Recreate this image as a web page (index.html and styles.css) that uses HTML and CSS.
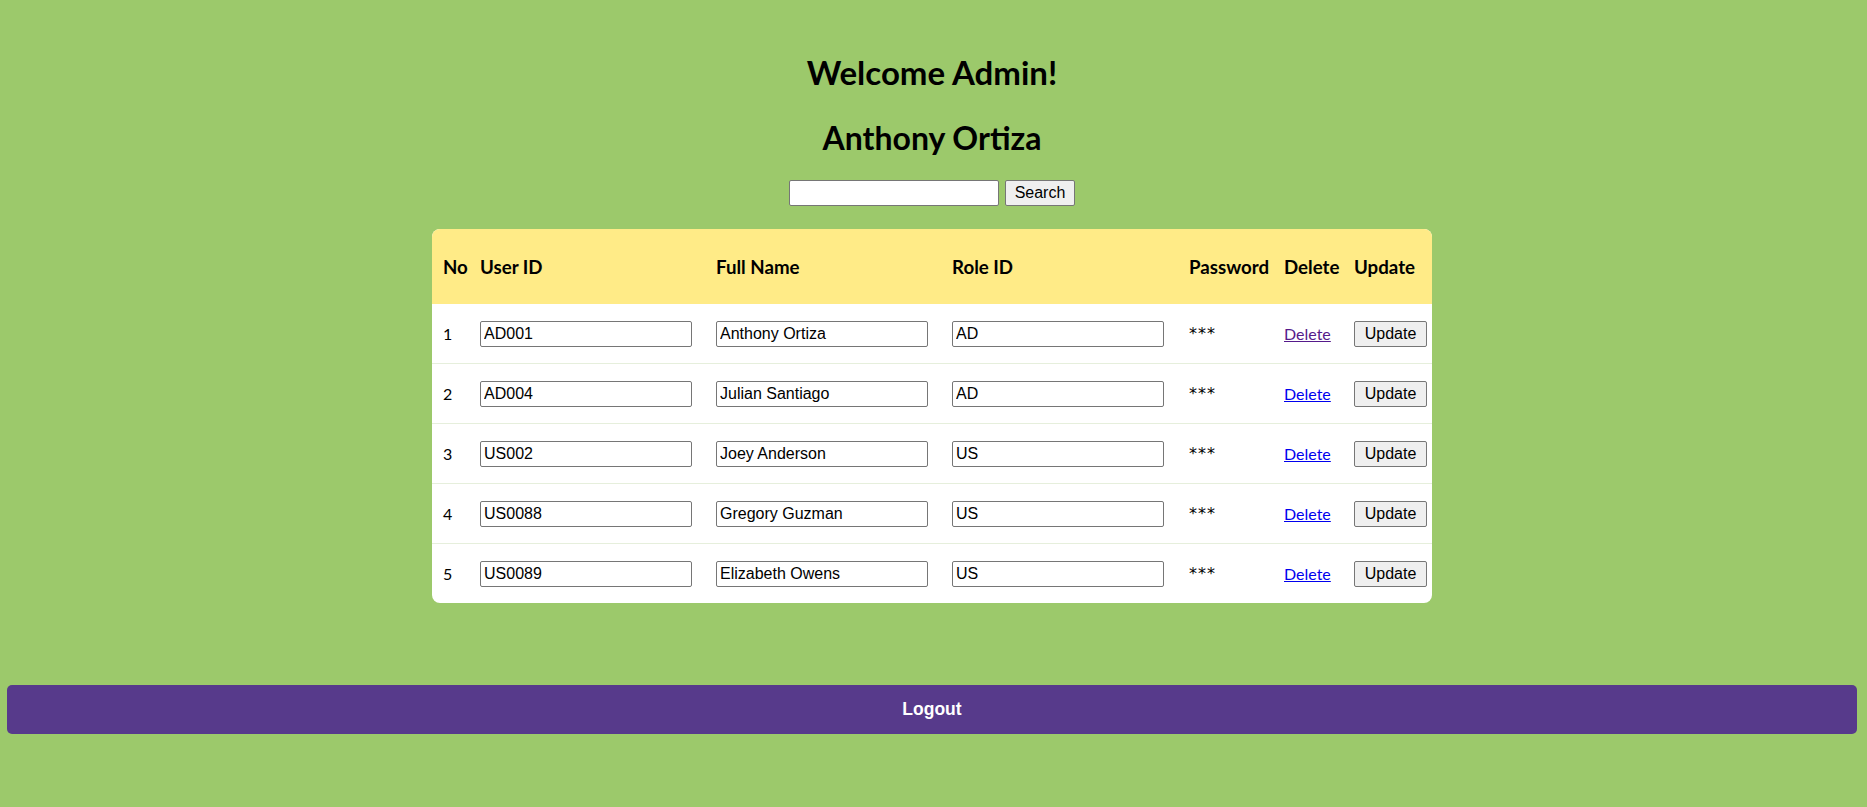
FILE: index.html
```html
<!DOCTYPE html>
<html>
<head>
<meta charset="utf-8">
<title>Admin</title>
<link rel="stylesheet" href="styles.css">
</head>
<body>
<div class="page">
  <h1 class="title">Welcome Admin!</h1>
  <h2 class="name">Anthony Ortiza</h2>
  <form class="search">
    <input class="search-input" type="text">
    <button class="btn search-btn" type="button">Search</button>
  </form>
  <div class="card">
    <table class="users">
      <colgroup>
        <col class="c-no"><col class="c-id"><col class="c-name"><col class="c-role"><col class="c-pass"><col class="c-del"><col class="c-upd">
      </colgroup>
      <thead>
        <tr><th>No</th><th>User ID</th><th>Full Name</th><th>Role ID</th><th>Password</th><th>Delete</th><th>Update</th></tr>
      </thead>
      <tbody>
        <tr><td>1</td><td><input class="field" value="AD001"></td><td><input class="field" value="Anthony Ortiza"></td><td><input class="field" value="AD"></td><td class="pw">***</td><td><a class="del visited" href="#">Delete</a></td><td><button class="btn upd" type="button">Update</button></td></tr>
        <tr><td>2</td><td><input class="field" value="AD004"></td><td><input class="field" value="Julian Santiago"></td><td><input class="field" value="AD"></td><td class="pw">***</td><td><a class="del" href="#">Delete</a></td><td><button class="btn upd" type="button">Update</button></td></tr>
        <tr><td>3</td><td><input class="field" value="US002"></td><td><input class="field" value="Joey Anderson"></td><td><input class="field" value="US"></td><td class="pw">***</td><td><a class="del" href="#">Delete</a></td><td><button class="btn upd" type="button">Update</button></td></tr>
        <tr><td>4</td><td><input class="field" value="US0088"></td><td><input class="field" value="Gregory Guzman"></td><td><input class="field" value="US"></td><td class="pw">***</td><td><a class="del" href="#">Delete</a></td><td><button class="btn upd" type="button">Update</button></td></tr>
        <tr><td>5</td><td><input class="field" value="US0089"></td><td><input class="field" value="Elizabeth Owens"></td><td><input class="field" value="US"></td><td class="pw">***</td><td><a class="del" href="#">Delete</a></td><td><button class="btn upd" type="button">Update</button></td></tr>
      </tbody>
    </table>
  </div>
  <div class="logout-wrap">
    <button class="logout" type="button">Logout</button>
  </div>
</div>
</body>
</html>
```
FILE: styles.css
```css
html, body {
  margin: 0;
  padding: 0;
  background: #9cc96b;
}
body {
  font-family: Lato, "Open Sans", sans-serif;
  color: #000;
}
.page {
  display: flex;
  flex-direction: column;
  align-items: center;
  padding: 51px 3px 0 0;
}
.title {
  margin: 0;
  font-size: 33px;
  line-height: 42px;
  font-weight: 700;
}
.name {
  margin: 24px 0 0 0;
  font-size: 32px;
  line-height: 42px;
  font-weight: 700;
}
.search {
  display: flex;
  gap: 6px;
  margin-top: 21px;
}
.search-input {
  box-sizing: border-box;
  width: 210px;
  height: 26px;
  border: 1px solid #767676;
  border-radius: 2px;
  padding: 0 3px;
  font: 16px "Liberation Sans", Arial, sans-serif;
  background: #fff;
}
.btn {
  box-sizing: border-box;
  height: 26px;
  border: 1px solid #767676;
  border-radius: 2px;
  background: #efefef;
  font: 16px "Liberation Sans", Arial, sans-serif;
  color: #000;
  padding: 0 6px;
}
.search-btn {
  width: 70px;
}
.card {
  margin-top: 23px;
  width: 1000px;
  background: #fff;
  border-radius: 8px;
  overflow: hidden;
}
.users {
  width: 1000px;
  table-layout: fixed;
  border-collapse: collapse;
}
.c-no { width: 37px; }
.c-id { width: 236px; }
.c-name { width: 236px; }
.c-role { width: 237px; }
.c-pass { width: 95px; }
.c-del { width: 70px; }
.c-upd { width: 89px; }
.users th {
  background: #ffeb87;
  height: 75px;
  padding: 0 0 0 11px;
  text-align: left;
  font-size: 18.7px;
  font-weight: 700;
  vertical-align: middle;
}
.users td {
  height: 59px;
  padding: 0 0 0 11px;
  font-size: 16px;
  vertical-align: middle;
  border-bottom: 1px solid #e6efdc;
}
.users tbody tr:last-child td {
  border-bottom: none;
}
.field {
  box-sizing: border-box;
  width: 212px;
  height: 26px;
  border: 1px solid #767676;
  border-radius: 2px;
  padding: 0 3px;
  font: 16px "Liberation Sans", Arial, sans-serif;
  color: #000;
  background: #fff;
}
.pw {
  font-family: "DejaVu Sans", sans-serif;
  font-size: 14px;
  letter-spacing: 1px;
}
.pw-cell {
  padding-bottom: 6px;
}
.del {
  color: #0000ee;
  text-decoration: underline;
  font-size: 16px;
}
.del.visited {
  color: #551a8b;
}
.upd {
  width: 73px;
}
.logout-wrap {
  align-self: stretch;
  padding: 82px 7px 0 7px;
}
.logout {
  display: block;
  width: 100%;
  height: 49px;
  border: none;
  border-radius: 5px;
  background: #573a8b;
  color: #fff;
  font: 700 17.5px "Liberation Sans", Arial, sans-serif;
}
```
